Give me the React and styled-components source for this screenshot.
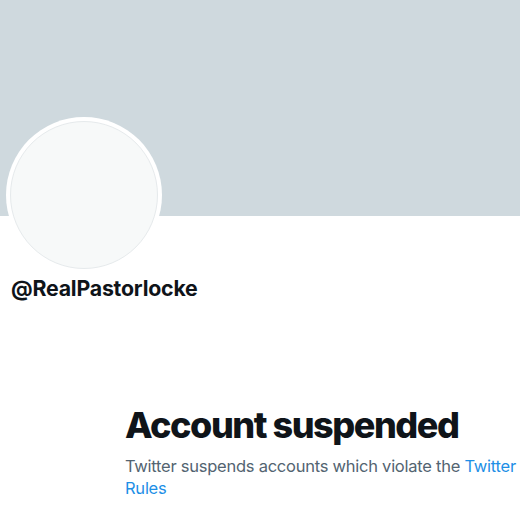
import React from "react";
import styled, { createGlobalStyle } from "styled-components";

const Global = createGlobalStyle`
  html, body {
    margin: 0;
    padding: 0;
    background: #ffffff;
    overflow: hidden;
  }
  body {
    font-family: Inter, "Liberation Sans", sans-serif;
  }
`;

function App() {
  return (
    <Page>
      <Global />
      <Banner />
      <ProfileHead>
        <Avatar>
          <AvatarInner />
        </Avatar>
        <Handle>@RealPastorlocke</Handle>
      </ProfileHead>
      <Notice>
        <Title>Account suspended</Title>
        <Message>
          Twitter suspends accounts which violate the{" "}
          <RulesLink href="#">Twitter Rules</RulesLink>
        </Message>
      </Notice>
    </Page>
  );
}

export default App;

const Page = styled.div`
  width: 520px;
  height: 520px;
  overflow: hidden;
  display: flex;
  flex-direction: column;
`;

const Banner = styled.div`
  height: 216px;
  background: #cfd9de;
  flex-shrink: 0;
`;

const ProfileHead = styled.div`
  padding-left: 6px;
  display: flex;
  flex-direction: column;
  align-items: flex-start;
`;

const Avatar = styled.div`
  margin-top: -99px;
  width: 156px;
  height: 156px;
  border-radius: 50%;
  background: #ffffff;
  padding: 4px;
  box-sizing: border-box;
`;

const AvatarInner = styled.div`
  width: 100%;
  height: 100%;
  border-radius: 50%;
  background: #f7f9f9;
  border: 1px solid #e6eaec;
  box-sizing: border-box;
`;

const Handle = styled.div`
  margin-top: 2px;
  padding-left: 5px;
  font-size: 21.3px;
  font-weight: 700;
  color: #0f1419;
  letter-spacing: -0.2px;
`;

const Notice = styled.div`
  margin-top: 104px;
  padding-left: 125px;
  width: 400px;
  flex-shrink: 0;
`;

const Title = styled.h1`
  margin: 0;
  font-size: 36px;
  line-height: 40px;
  font-weight: 800;
  color: #0f1419;
  letter-spacing: -1.45px;
`;

const Message = styled.p`
  margin: 10px 0 0;
  font-size: 16.5px;
  line-height: 22px;
  color: #536471;
  letter-spacing: -0.25px;
`;

const RulesLink = styled.a`
  color: #1d8fe6;
  text-decoration: none;
`;
